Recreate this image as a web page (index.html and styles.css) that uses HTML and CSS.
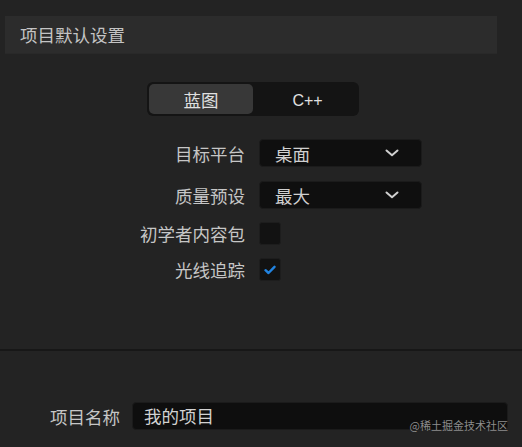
FILE: index.html
```html
<!DOCTYPE html>
<html lang="zh">
<head>
<meta charset="utf-8">
<link rel="stylesheet" href="styles.css">
</head>
<body>
<div class="page">
  <div class="header">项目默认设置</div>
  <div class="top">
    <div class="segmented">
      <div class="seg seg-active">蓝图</div>
      <div class="seg seg-code">C++</div>
    </div>
    <div class="form">
      <div class="row row-select">
        <div class="label">目标平台</div>
        <div class="select">
          <span>桌面</span>
          <svg class="chev" width="14" height="8" viewBox="0 0 14 8"><path d="M1.5 1.5 L7 6.2 L12.5 1.5" fill="none" stroke="#d0d0d0" stroke-width="2" stroke-linecap="round" stroke-linejoin="round"/></svg>
        </div>
      </div>
      <div class="row row-select">
        <div class="label">质量预设</div>
        <div class="select">
          <span>最大</span>
          <svg class="chev" width="14" height="8" viewBox="0 0 14 8"><path d="M1.5 1.5 L7 6.2 L12.5 1.5" fill="none" stroke="#d0d0d0" stroke-width="2" stroke-linecap="round" stroke-linejoin="round"/></svg>
        </div>
      </div>
      <div class="row row-check">
        <div class="label">初学者内容包</div>
        <div class="check"></div>
      </div>
      <div class="row row-check">
        <div class="label">光线追踪</div>
        <div class="check">
          <svg width="12" height="10" viewBox="0 0 12 10"><path d="M1.5 5.2 L4.5 8 L10.5 1.8" fill="none" stroke="#2183e0" stroke-width="2.4" stroke-linecap="round" stroke-linejoin="round"/></svg>
        </div>
      </div>
    </div>
  </div>
  <div class="divider"></div>
  <div class="bottom">
    <div class="label name-label">项目名称</div>
    <div class="input">我的项目</div>
  </div>
  <div class="watermark">@稀土掘金技术社区</div>
</div>
</body>
</html>
```
FILE: styles.css
```css
* { box-sizing: border-box; }
html, body {
  margin: 0;
  padding: 0;
  background: #232323;
}
body {
  font-family: "Noto Sans CJK SC", "Noto Sans", sans-serif;
  color: #c8c8c8;
  width: 522px;
  height: 447px;
  overflow: hidden;
}
.page {
  position: relative;
  width: 522px;
  height: 447px;
  padding-top: 16px;
}
.header {
  margin-left: 5px;
  width: 492px;
  height: 38px;
  background: #2c2c2c;
  border-bottom: 1px solid #292929;
  padding-left: 15px;
  font-size: 17.5px;
  line-height: 37px;
  color: #c4c4c4;
}
.top {
  height: 295px;
  padding-top: 28px;
}
.segmented {
  margin-left: 147px;
  width: 212px;
  height: 34px;
  background: #141414;
  border-radius: 6px;
  padding: 2px;
  display: flex;
}
.seg {
  flex: 1;
  display: flex;
  align-items: center;
  justify-content: center;
  font-size: 17.5px;
  color: #e0e0e0;
  border-radius: 5px;
}
.seg-code {
  font-family: "Liberation Sans", sans-serif;
  font-size: 16px;
  padding-left: 5px;
  padding-top: 3px;
}
.seg-active {
  flex: 0 0 104px;
  background: #383838;
}
.form {
  margin-top: 23px;
  display: flex;
  flex-direction: column;
  gap: 13px;
}
.row {
  display: flex;
  align-items: center;
}
.row-select { height: 28px; }
.row-select + .row-select { margin-top: 1px; }
.row-check { height: 23px; }
.label {
  width: 245px;
  text-align: right;
  font-size: 17.5px;
  color: #c6c6c6;
  white-space: nowrap;
}
.select {
  margin-left: 14px;
  width: 163px;
  height: 28px;
  background: #0f0f0f;
  border: 1px solid #1b1b1b;
  border-radius: 4px;
  display: flex;
  align-items: center;
  justify-content: space-between;
  padding: 0 22px 0 15px;
  font-size: 17.5px;
  color: #d0d0d0;
}
.chev { display: block; }
.check {
  margin-left: 14px;
  width: 22px;
  height: 23px;
  background: #121212;
  border: 1px solid #1d1d1d;
  border-radius: 3px;
  display: flex;
  align-items: center;
  justify-content: center;
}
.check svg { display: block; }
.divider {
  height: 2px;
  background: #171717;
  margin-top: 0;
}
.bottom {
  margin-top: 51px;
  display: flex;
  align-items: center;
}
.name-label {
  width: 120px;
}
.input {
  margin-left: 12px;
  width: 376px;
  height: 28px;
  background: #0e0e0e;
  border: 1px solid #1b1b1b;
  border-radius: 4px;
  padding-left: 11px;
  font-size: 17.5px;
  line-height: 25px;
  color: #d2d2d2;
}
.watermark {
  position: absolute;
  right: 14px;
  top: 418px;
  font-size: 11px;
  line-height: 15px;
  color: #8c8c8c;
}
```
